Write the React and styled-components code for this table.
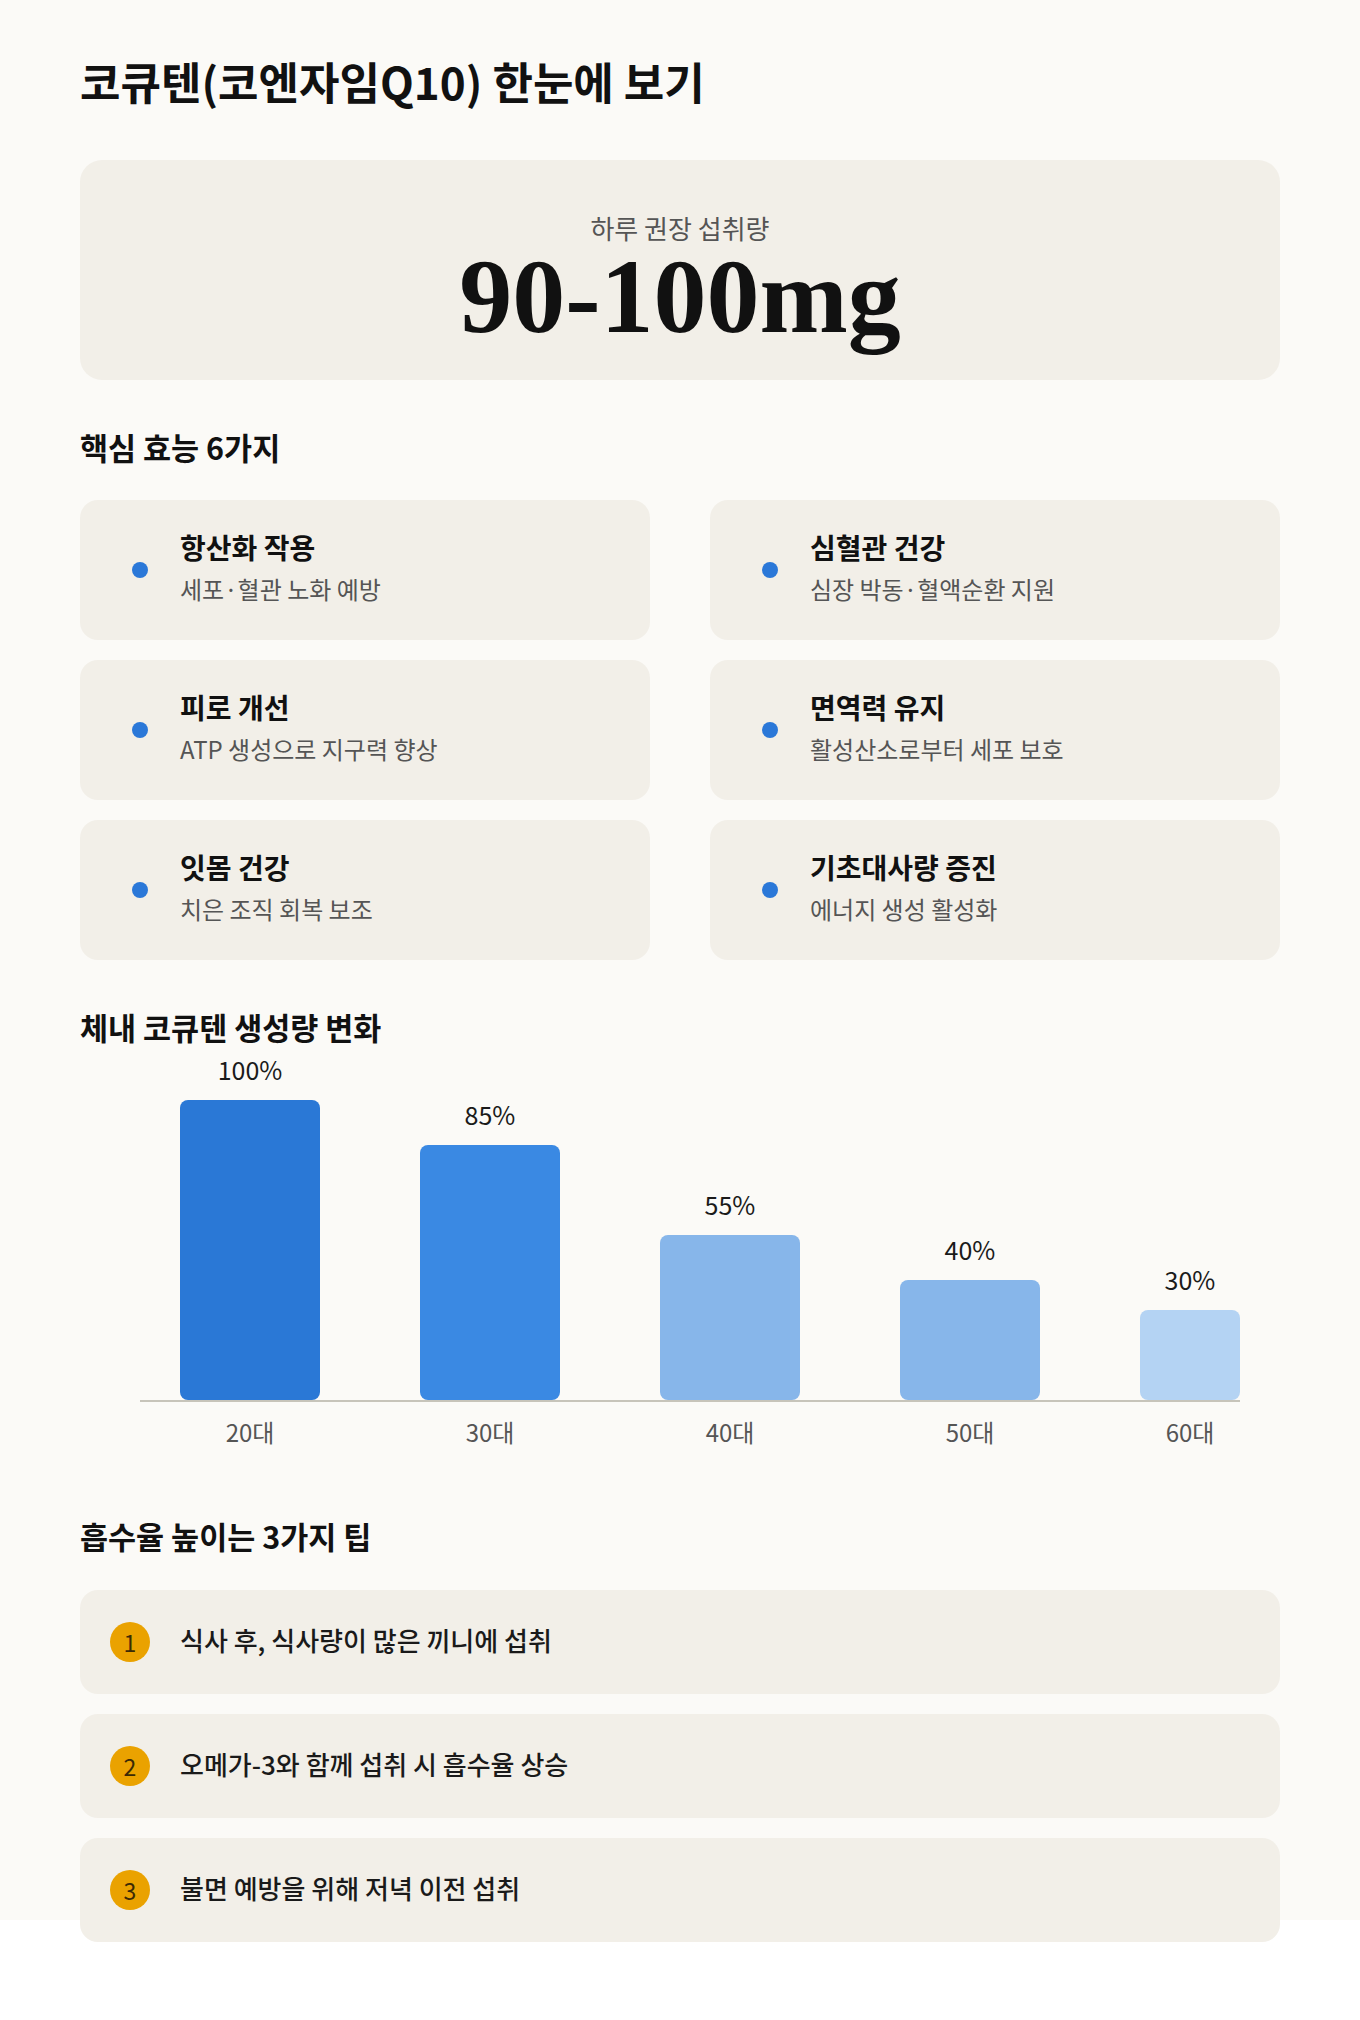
import React from "react";
import styled, { createGlobalStyle } from "styled-components";

const benefits = [
  { title: "항산화 작용", desc: "세포·혈관 노화 예방" },
  { title: "심혈관 건강", desc: "심장 박동·혈액순환 지원" },
  { title: "피로 개선", desc: "ATP 생성으로 지구력 향상" },
  { title: "면역력 유지", desc: "활성산소로부터 세포 보호" },
  { title: "잇몸 건강", desc: "치은 조직 회복 보조" },
  { title: "기초대사량 증진", desc: "에너지 생성 활성화" },
];

const ages = [
  { label: "20대", value: 100, color: "#2a78d6" },
  { label: "30대", value: 85, color: "#3a89e3" },
  { label: "40대", value: 55, color: "#87b6ea" },
  { label: "50대", value: 40, color: "#87b6ea" },
  { label: "60대", value: 30, color: "#b4d3f3" },
];

const tips = [
  "식사 후, 식사량이 많은 끼니에 섭취",
  "오메가-3와 함께 섭취 시 흡수율 상승",
  "불면 예방을 위해 저녁 이전 섭취",
];

export default function App() {
  return (
    <>
      <GlobalStyle />
      <Page>
        <Title>코큐텐(코엔자임Q10) 한눈에 보기</Title>

        <DoseCard>
          <DoseLabel>하루 권장 섭취량</DoseLabel>
          <DoseValue>90-100mg</DoseValue>
        </DoseCard>

        <SectionTitle>핵심 효능 6가지</SectionTitle>
        <BenefitGrid>
          {benefits.map((b) => (
            <BenefitCard key={b.title}>
              <Dot />
              <BenefitText>
                <BenefitTitle>{b.title}</BenefitTitle>
                <BenefitDesc>{b.desc}</BenefitDesc>
              </BenefitText>
            </BenefitCard>
          ))}
        </BenefitGrid>

        <SectionTitle $top={47} $bottom={5}>
          체내 코큐텐 생성량 변화
        </SectionTitle>
        <Chart>
          <Plot>
            {ages.map((a, i) => (
              <Column key={a.label} $last={i === ages.length - 1}>
                <ValueLabel>{a.value}%</ValueLabel>
                <Bar $color={a.color} style={{ height: a.value * 3 }} />
              </Column>
            ))}
          </Plot>
          <AxisRow>
            {ages.map((a, i) => (
              <AxisLabel key={a.label} $last={i === ages.length - 1}>
                {a.label}
              </AxisLabel>
            ))}
          </AxisRow>
        </Chart>

        <SectionTitle $top={69} $bottom={34}>
          흡수율 높이는 3가지 팁
        </SectionTitle>
        <TipList>
          {tips.map((t, i) => (
            <TipCard key={t}>
              <Badge>{i + 1}</Badge>
              <TipText>{t}</TipText>
            </TipCard>
          ))}
        </TipList>
      </Page>
    </>
  );
}

const GlobalStyle = createGlobalStyle`
  body {
    margin: 0;
    background: #ffffff;
    font-family: "Noto Sans CJK KR", "Noto Sans", sans-serif;
    color: #111;
  }
  * { box-sizing: border-box; }
`;

// the cream backdrop stops at 1920px, the last card runs past it
const Page = styled.div`
  padding: 53px 80px 78px;
  background: linear-gradient(#fbfaf7 0, #fbfaf7 1920px, #ffffff 1920px);
`;

const Title = styled.h1`
  margin: 0 0 51px;
  font-size: 44px;
  line-height: 56px;
  font-weight: 700;
  color: #111;
`;

const DoseCard = styled.div`
  background: #f2efe8;
  border-radius: 22px;
  padding: 52px 0 30px;
  text-align: center;
`;

const DoseLabel = styled.div`
  font-size: 26px;
  line-height: 32px;
  color: #555;
`;

const DoseValue = styled.div`
  font-family: "Liberation Serif", "Times New Roman", serif;
  font-size: 106px;
  line-height: 1;
  font-weight: 700;
  color: #111;
`;

const SectionTitle = styled.h2`
  margin: ${(p) => p.$top ?? 47}px 0 ${(p) => p.$bottom ?? 33}px;
  font-size: 30.5px;
  line-height: 40px;
  font-weight: 700;
  color: #111;
`;

const BenefitGrid = styled.div`
  display: grid;
  grid-template-columns: 1fr 1fr;
  column-gap: 60px;
  row-gap: 20px;
`;

const BenefitCard = styled.div`
  display: flex;
  align-items: center;
  gap: 32px;
  padding: 29px 52px;
  background: #f2efe8;
  border-radius: 18px;
`;

const Dot = styled.span`
  flex: 0 0 16px;
  width: 16px;
  height: 16px;
  border-radius: 50%;
  background: #2b78d8;
`;

const BenefitText = styled.div`
  padding-bottom: 6px;
`;

const BenefitTitle = styled.div`
  font-size: 28px;
  line-height: 36px;
  font-weight: 700;
  color: #111;
`;

const BenefitDesc = styled.div`
  margin-top: 8px;
  font-size: 24px;
  line-height: 32px;
  color: #555;
`;

const Chart = styled.div`
  margin: 0 40px 0 60px;
`;

const Plot = styled.div`
  display: flex;
  align-items: flex-end;
  gap: 100px;
  height: 350px;
  padding-left: 40px;
  border-bottom: 2px solid #c7c4ba;
`;

const Column = styled.div`
  flex: 0 ${(p) => (p.$last ? 1 : 0)} 140px;
  min-width: 0;
  display: flex;
  flex-direction: column;
  align-items: center;
`;

const ValueLabel = styled.div`
  margin-bottom: 14px;
  font-size: 25px;
  line-height: 34px;
  color: #1a1a1a;
`;

const Bar = styled.div`
  width: 100%;
  border-radius: 8px;
  background: ${(p) => p.$color};
`;

const AxisRow = styled.div`
  display: flex;
  gap: 100px;
  padding-left: 40px;
  margin-top: 15px;
`;

const AxisLabel = styled.div`
  flex: 0 ${(p) => (p.$last ? 1 : 0)} 140px;
  min-width: 0;
  text-align: center;
  font-size: 24px;
  line-height: 30px;
  color: #555;
`;

const TipList = styled.div`
  display: flex;
  flex-direction: column;
  gap: 20px;
`;

const TipCard = styled.div`
  display: flex;
  align-items: center;
  gap: 30px;
  padding: 32px 30px;
  background: #f2efe8;
  border-radius: 18px;
`;

const Badge = styled.span`
  flex: 0 0 40px;
  width: 40px;
  height: 40px;
  border-radius: 50%;
  display: flex;
  align-items: center;
  justify-content: center;
  background: #eaa200;
  color: #3b2a05;
  font-size: 23px;
`;

const TipText = styled.div`
  padding-bottom: 4px;
  font-size: 26px;
  line-height: 34px;
  font-weight: 500;
  color: #1a1a1a;
`;
